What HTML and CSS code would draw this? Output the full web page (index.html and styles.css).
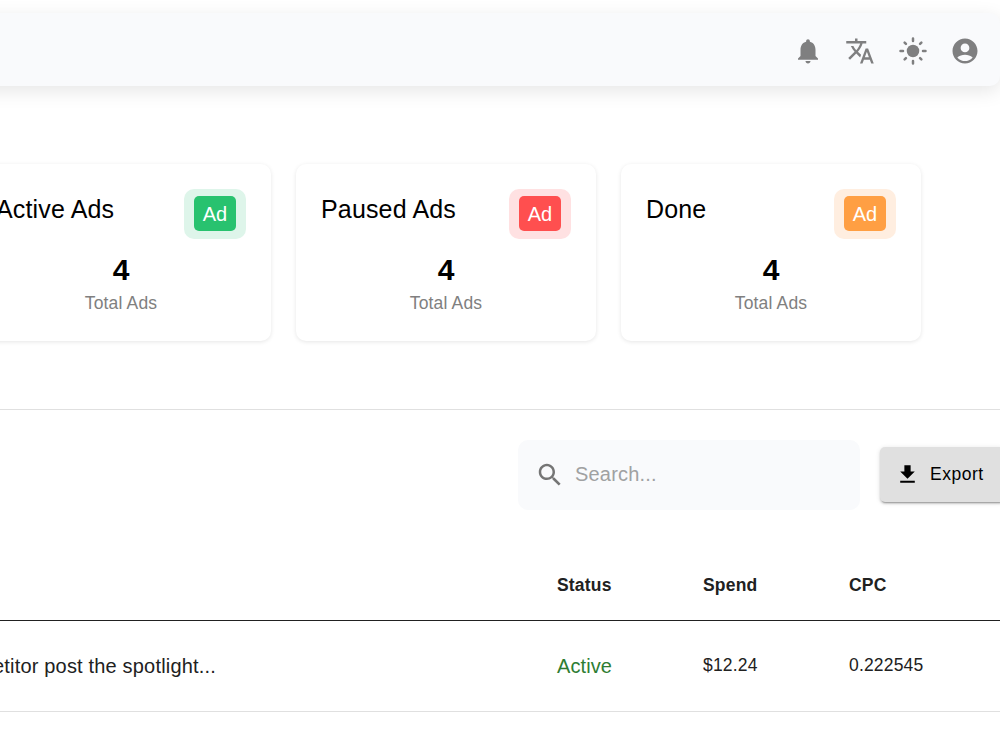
FILE: index.html
```html
<!DOCTYPE html>
<html lang="en">
<head>
    <meta charset="UTF-8">
    <meta name="viewport" content="width=device-width, initial-scale=1.0">
    <title>Ads Dashboard</title>
    <link rel="stylesheet" href="styles.css">
</head>
<body>
    <header class="topbar">
        <svg class="icon" viewBox="0 0 24 24"><path d="M12 22c1.1 0 2-.9 2-2h-4c0 1.1.89 2 2 2zm6-6v-5c0-3.07-1.64-5.64-4.5-6.32V4c0-.83-.67-1.5-1.5-1.5s-1.5.67-1.5 1.5v.68C7.63 5.36 6 7.92 6 11v5l-2 2v1h16v-1l-2-2z"/></svg>
        <svg class="icon" viewBox="0 0 24 24"><path d="m12.87 15.07-2.54-2.51.03-.03c1.74-1.94 2.98-4.17 3.71-6.53H17V4h-7V2H8v2H1v1.99h11.17C11.5 7.92 10.44 9.75 9 11.35 8.07 10.32 7.3 9.19 6.69 8h-2c.73 1.63 1.73 3.17 2.98 4.56l-5.09 5.02L4 19l5-5 3.11 3.11.76-2.04zM18.5 10h-2L12 22h2l1.12-3h4.75L21 22h2l-4.5-12zm-2.62 7 1.62-4.33L19.12 17h-3.24z"/></svg>
        <svg class="icon" viewBox="0 0 24 24">
            <circle cx="12" cy="12" r="5"/>
            <path class="rays" d="M2 12h2M20 12h2M12 2v2M12 20v2M5.3 5.3l1.05 1.05M17.65 17.65l1.05 1.05M18.7 5.3l-1.05 1.05M6.35 17.65L5.3 18.7"/>
        </svg>
        <svg class="icon" viewBox="0 0 24 24"><path d="M12 2C6.48 2 2 6.48 2 12s4.48 10 10 10 10-4.48 10-10S17.52 2 12 2zm0 4c1.93 0 3.5 1.57 3.5 3.5S13.93 13 12 13s-3.5-1.57-3.5-3.5S10.07 6 12 6zm0 14c-2.03 0-4.43-.82-6.14-2.88C7.55 15.8 9.68 15 12 15s4.45.8 6.14 2.12C16.43 19.18 14.03 20 12 20z"/></svg>
    </header>

    <section class="cards">
        <div class="card">
            <div class="card-head">
                <h2>Active Ads</h2>
                <div class="badge green"><span>Ad</span></div>
            </div>
            <div class="count">4</div>
            <div class="label">Total Ads</div>
        </div>
        <div class="card">
            <div class="card-head">
                <h2>Paused Ads</h2>
                <div class="badge red"><span>Ad</span></div>
            </div>
            <div class="count">4</div>
            <div class="label">Total Ads</div>
        </div>
        <div class="card">
            <div class="card-head">
                <h2>Done</h2>
                <div class="badge orange"><span>Ad</span></div>
            </div>
            <div class="count">4</div>
            <div class="label">Total Ads</div>
        </div>
    </section>

    <section class="toolbar">
        <div class="search">
            <svg class="icon search-icon" viewBox="0 0 24 24"><path d="M15.5 14h-.79l-.28-.27C15.41 12.59 16 11.11 16 9.5 16 5.91 13.09 3 9.5 3S3 5.91 3 9.5 5.91 16 9.5 16c1.61 0 3.09-.59 4.23-1.57l.27.28v.79l5 4.99L20.49 19l-4.99-5zm-6 0C7.01 14 5 11.99 5 9.5S7.01 5 9.5 5 14 7.01 14 9.5 11.99 14 9.5 14z"/></svg>
            <input type="text" placeholder="Search...">
        </div>
        <button class="export">
            <svg class="export-icon" viewBox="0 0 24 24"><path d="M19 9h-4V3H9v6H5l7 7 7-7zM5 18v2h14v-2H5z"/></svg>
            Export
        </button>
    </section>

    <table class="ads">
        <thead>
            <tr>
                <th class="col-name"></th>
                <th class="col-status">Status</th>
                <th class="col-spend">Spend</th>
                <th>CPC</th>
            </tr>
        </thead>
        <tbody>
            <tr>
                <td class="name"><span>etitor post the spotlight...</span></td>
                <td class="status">Active</td>
                <td>$12.24</td>
                <td>0.222545</td>
            </tr>
        </tbody>
    </table>
</body>
</html>
```

FILE: styles.css
```css
* {
    box-sizing: border-box;
}
body {
    margin: 0;
    padding-top: 13px;
    width: 1000px;
    height: 750px;
    overflow: hidden;
    background-color: #fff;
    color: #000;
    font-family: "Liberation Sans", Arial, sans-serif;
}
.icon {
    width: 30px;
    height: 30px;
    flex: none;
    fill: #7f7f80;
}
.icon.search-icon {
    fill: #757575;
}
.rays {
    fill: none;
    stroke: #7f7f80;
    stroke-width: 2;
    stroke-linecap: round;
}

/* top bar */
.topbar {
    display: flex;
    align-items: center;
    justify-content: flex-end;
    gap: 22.5px;
    height: 73px;
    margin-left: -40px;
    padding: 3px 20px 0 0;
    background-color: #f9fafc;
    border-radius: 0 10px 10px 0;
    box-shadow: 0 5px 19px rgba(0, 0, 0, 0.1);
}

/* summary cards */
.cards {
    display: flex;
    gap: 25px;
    margin: 78px 0 0 -29px;
}
.card {
    flex: none;
    width: 300px;
    height: 177px;
    padding: 25px;
    border-radius: 10px;
    box-shadow: 0 1px 4px rgba(0, 0, 0, 0.1);
    text-align: center;
}
.card-head {
    display: flex;
    justify-content: space-between;
    height: 50px;
}
.card h2 {
    margin: 0;
    font-size: 25px;
    font-weight: 400;
    letter-spacing: 0.15px;
    line-height: 40px;
}
.badge {
    display: flex;
    justify-content: center;
    width: 62px;
    height: 50px;
    padding-top: 7px;
    border-radius: 10px;
}
.badge span {
    width: 42px;
    height: 35px;
    border-radius: 5px;
    color: #fff;
    font-size: 20px;
    line-height: 36px;
}
.green { background-color: #def5ea; }
.green span { background-color: #28c26f; }
.red { background-color: #ffe1e2; }
.red span { background-color: #ff4f4f; }
.orange { background-color: #ffeee0; }
.orange span { background-color: #ff9f43; }
.count {
    margin-top: 12px;
    font-size: 30px;
    font-weight: 700;
    line-height: 38px;
}
.label {
    color: #808080;
    font-size: 17.5px;
    letter-spacing: 0.15px;
    line-height: 29px;
}

/* search and export */
.toolbar {
    display: flex;
    justify-content: flex-end;
    gap: 20px;
    margin-top: 68px;
    padding-top: 30px;
    border-top: 1px solid #e0e0e0;
}
.search {
    display: flex;
    align-items: center;
    gap: 10px;
    width: 342px;
    height: 70px;
    padding: 0 17px;
    background-color: #f9fafc;
    border-radius: 10px;
}
.search input {
    width: 250px;
    padding: 0 0 2px;
    border: none;
    outline: none;
    background: none;
    font-family: inherit;
    font-size: 20px;
    letter-spacing: 0.19px;
}
.search input::placeholder {
    color: #a0a1a2;
}
.export {
    display: flex;
    align-items: center;
    gap: 10px;
    width: 125px;
    height: 55px;
    margin: 7px -5px 0 0;
    padding: 0 15px 1px;
    border: none;
    border-radius: 5px;
    background-color: #e0e0e0;
    box-shadow: 0 3px 1px -2px rgba(0, 0, 0, 0.2), 0 2px 2px rgba(0, 0, 0, 0.14), 0 1px 5px rgba(0, 0, 0, 0.12);
    font-family: inherit;
    font-size: 17.5px;
    letter-spacing: 0.5px;
}
.export-icon {
    width: 25px;
    height: 25px;
    flex: none;
}

/* ads table */
.ads {
    width: 1000px;
    margin-top: 40px;
    border-collapse: collapse;
    table-layout: fixed;
    color: #212121;
    font-size: 17.5px;
    letter-spacing: 0.18px;
    text-align: left;
}
.ads th {
    height: 70px;
    padding: 2px 0 0;
    border-bottom: 1px solid #212121;
}
.ads td {
    height: 91px;
    padding: 0 0 1px;
    border-bottom: 1px solid #e0e0e0;
}
.col-name { width: 557px; }
.col-status { width: 146px; }
.col-spend { width: 146px; }
.ads .name {
    padding: 1px 0 0;
    font-size: 20px;
}
.name span {
    margin-left: -7px;
}
.ads .status {
    padding: 1px 0 0;
    color: #2e7d32;
    font-size: 20px;
    letter-spacing: 0.1px;
}
```
